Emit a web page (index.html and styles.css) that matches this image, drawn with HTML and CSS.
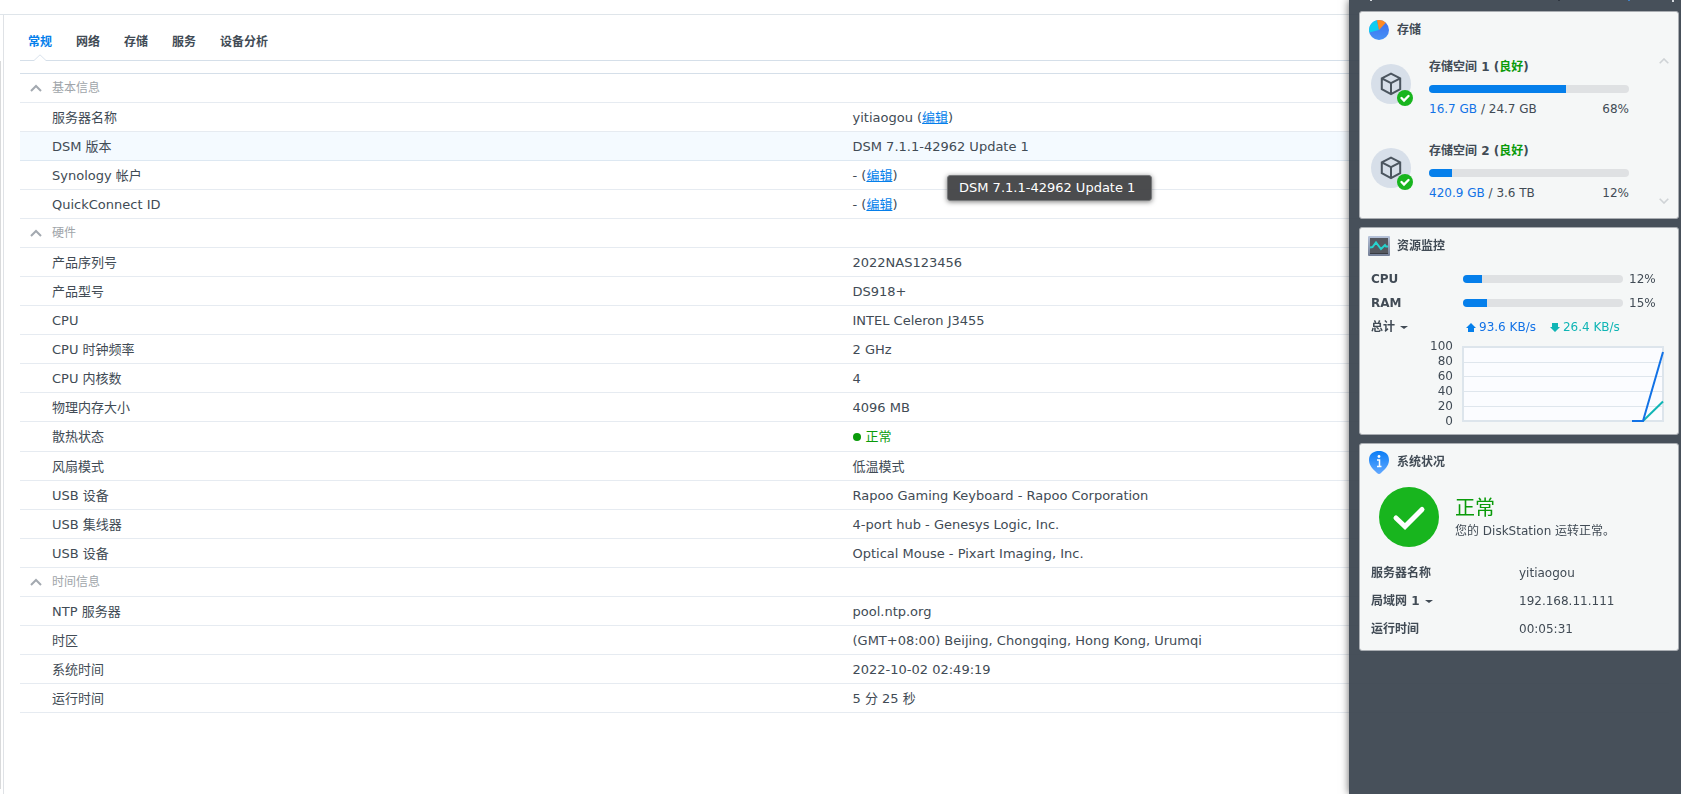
FILE: index.html
```html
<!DOCTYPE html>
<html lang="zh-CN">
<head>
<meta charset="utf-8">
<title>信息中心</title>
<link rel="stylesheet" href="styles.css">
</head>
<body>
<div class="window">
  <div class="rail"><div class="rail-thumb"></div></div>
  <main class="content">
    <nav class="tabs">
      <button class="tab active" type="button">常规<svg class="notch" viewBox="0 0 12 7" width="12" height="7"><path d="M0 6.5L6 .8L12 6.5V7H0Z" fill="#fff"/><path d="M0 6.5L6 .8L12 6.5" fill="none" stroke="#d9e2ec"/></svg></button>
      <button class="tab" type="button">网络</button>
      <button class="tab" type="button">存储</button>
      <button class="tab" type="button">服务</button>
      <button class="tab" type="button">设备分析</button>
    </nav>
    <table class="info">
      <tbody>
        <tr><th class="group" colspan="2" scope="colgroup"><button class="toggle" type="button"><svg viewBox="0 0 12 8" width="12" height="8"><path d="M1 7L6 2L11 7" fill="none" stroke="#a3a9b0" stroke-width="2"/></svg>基本信息</button></th></tr>
        <tr><th scope="row">服务器名称</th><td>yitiaogou (<a href="#name">编辑</a>)</td></tr>
        <tr class="hover"><th scope="row">DSM 版本</th><td>DSM 7.1.1-42962 Update 1</td></tr>
        <tr><th scope="row">Synology 帐户</th><td>- (<a href="#account">编辑</a>)</td></tr>
        <tr><th scope="row">QuickConnect ID</th><td>- (<a href="#quickconnect">编辑</a>)</td></tr>
      </tbody>
      <tbody>
        <tr><th class="group" colspan="2" scope="colgroup"><button class="toggle" type="button"><svg viewBox="0 0 12 8" width="12" height="8"><path d="M1 7L6 2L11 7" fill="none" stroke="#a3a9b0" stroke-width="2"/></svg>硬件</button></th></tr>
        <tr><th scope="row">产品序列号</th><td>2022NAS123456</td></tr>
        <tr><th scope="row">产品型号</th><td>DS918+</td></tr>
        <tr><th scope="row">CPU</th><td>INTEL Celeron J3455</td></tr>
        <tr><th scope="row">CPU 时钟频率</th><td>2 GHz</td></tr>
        <tr><th scope="row">CPU 内核数</th><td>4</td></tr>
        <tr><th scope="row">物理内存大小</th><td>4096 MB</td></tr>
        <tr class="thermal"><th scope="row">散热状态</th><td><span class="state"><i class="dot"></i>正常</span></td></tr>
        <tr><th scope="row">风扇模式</th><td>低温模式</td></tr>
        <tr><th scope="row">USB 设备</th><td>Rapoo Gaming Keyboard - Rapoo Corporation</td></tr>
        <tr><th scope="row">USB 集线器</th><td>4-port hub - Genesys Logic, Inc.</td></tr>
        <tr><th scope="row">USB 设备</th><td>Optical Mouse - Pixart Imaging, Inc.</td></tr>
      </tbody>
      <tbody>
        <tr><th class="group" colspan="2" scope="colgroup"><button class="toggle" type="button"><svg viewBox="0 0 12 8" width="12" height="8"><path d="M1 7L6 2L11 7" fill="none" stroke="#a3a9b0" stroke-width="2"/></svg>时间信息</button></th></tr>
        <tr><th scope="row">NTP 服务器</th><td>pool.ntp.org</td></tr>
        <tr><th scope="row">时区</th><td>(GMT+08:00) Beijing, Chongqing, Hong Kong, Urumqi</td></tr>
        <tr><th scope="row">系统时间</th><td>2022-10-02 02:49:19</td></tr>
        <tr><th scope="row">运行时间</th><td>5 分 25 秒</td></tr>
      </tbody>
    </table>
  </main>
</div>

<div class="tooltip" role="tooltip">DSM 7.1.1-42962 Update 1</div>

<aside class="widgets">
  <svg class="strip" viewBox="0 0 320 11" width="320" height="11"><path d="M11 0h2v1h-2zM313 0h2v2h-2z" fill="#d5d9de"/><path d="M199 0h2v1h-2z" fill="#2f3640"/><path d="M269 0h2v1h-2z" fill="#3f7fc4"/></svg>

  <section class="card">
    <h2 class="card-title">
      <svg viewBox="0 0 20 20" width="22" height="20"><defs><linearGradient id="pie" x1="0" y1="0" x2="0" y2="1"><stop offset="0" stop-color="#3b6df0"/><stop offset="1" stop-color="#4792f5"/></linearGradient></defs><circle cx="10" cy="10" r="10" fill="url(#pie)"/><path d="M10 10L.3 12.4A10 10 0 0 1 8 .2Z" fill="#10cdf0"/><path d="M10 10L8 .2A10 10 0 0 1 16.8 2.7Z" fill="#ff8a25"/></svg>
      存储
    </h2>
    <div class="storage">
      <div class="volumes">
        <div class="volume">
          <svg class="volume-icon" viewBox="0 0 44 44" width="44" height="44"><circle cx="20" cy="20" r="20" fill="#d7dfe9"/><path d="M20 9.700L29.200 14.400V25.200L20 30.200L10.800 25.200V14.400ZM10.800 14.400L20 19.200L29.200 14.400M20 19.200V30.200" fill="none" stroke="#4b555f" stroke-width="2"/><circle cx="34" cy="34" r="8" fill="#18b51e"/><path d="M30.500 34L33 36.500L37.500 32" fill="none" stroke="#fff" stroke-width="2.400" stroke-linecap="round"/></svg>
          <div class="volume-body">
            <h3 class="volume-name">存储空间 1 (<span class="good">良好</span>)</h3>
            <div class="bar" role="progressbar" aria-valuenow="68"><div class="fill" style="width:68.5%"></div></div>
            <div class="usage"><span><span class="used">16.7 GB</span> / 24.7 GB</span><span>68%</span></div>
          </div>
        </div>
        <div class="volume">
          <svg class="volume-icon" viewBox="0 0 44 44" width="44" height="44"><circle cx="20" cy="20" r="20" fill="#d7dfe9"/><path d="M20 9.700L29.200 14.400V25.200L20 30.200L10.800 25.200V14.400ZM10.800 14.400L20 19.200L29.200 14.400M20 19.200V30.200" fill="none" stroke="#4b555f" stroke-width="2"/><circle cx="34" cy="34" r="8" fill="#18b51e"/><path d="M30.500 34L33 36.500L37.500 32" fill="none" stroke="#fff" stroke-width="2.400" stroke-linecap="round"/></svg>
          <div class="volume-body">
            <h3 class="volume-name">存储空间 2 (<span class="good">良好</span>)</h3>
            <div class="bar" role="progressbar" aria-valuenow="12"><div class="fill" style="width:11.5%"></div></div>
            <div class="usage"><span><span class="used">420.9 GB</span> / 3.6 TB</span><span>12%</span></div>
          </div>
        </div>
      </div>
      <div class="pager">
        <button class="icon-button" type="button" aria-label="上一个"><svg viewBox="0 0 10 6" width="10" height="6"><path d="M.7 5.3L5 1L9.3 5.3" fill="none" stroke="#cfd3d6" stroke-width="1.6"/></svg></button>
        <button class="icon-button" type="button" aria-label="下一个"><svg viewBox="0 0 10 6" width="10" height="6"><path d="M.7 .7L5 5L9.3 .7" fill="none" stroke="#cfd3d6" stroke-width="1.6"/></svg></button>
      </div>
    </div>
  </section>

  <section class="card">
    <h2 class="card-title">
      <svg viewBox="0 0 22 20" width="22" height="20"><defs><linearGradient id="frame" x1="0" y1="0" x2="0" y2="1"><stop offset="0" stop-color="#b8c4da"/><stop offset="1" stop-color="#737e96"/></linearGradient></defs><rect width="22" height="20" rx="1" fill="url(#frame)"/><rect x="2" y="2" width="18" height="16" fill="#55585f"/><path d="M2 17h18v1H2z" fill="#383b42"/><path d="M2 11.500L4.500 11L8 6.500L13 13L17 9L18 10.500H20" fill="none" stroke="#27d3cd" stroke-width="2"/></svg>
      资源监控
    </h2>
    <div class="resources">
      <div class="meter"><span class="label">CPU</span><div class="bar" role="progressbar" aria-valuenow="12"><div class="fill" style="width:12%"></div></div><span>12%</span></div>
      <div class="meter"><span class="label">RAM</span><div class="bar" role="progressbar" aria-valuenow="15"><div class="fill" style="width:15%"></div></div><span>15%</span></div>
      <div class="meter">
        <button class="picker" type="button">总计<i class="caret"></i></button>
        <div class="rates">
          <span class="rate up"><svg viewBox="0 0 10 9" width="10" height="9"><path d="M5 0L10 5H8V9H2V5H0Z" fill="#057feb"/></svg>93.6 KB/s</span>
          <span class="rate down"><svg viewBox="0 0 10 9" width="10" height="9"><path d="M2 0H8V4H10L5 9L0 4H2Z" fill="#10b5b5"/></svg>26.4 KB/s</span>
        </div>
      </div>
      <div class="chart">
        <div class="axis"><span>100</span><span>80</span><span>60</span><span>40</span><span>20</span><span>0</span></div>
        <svg class="plot" viewBox="0 0 202 76" width="202" height="76"><rect x="1" y="1" width="200" height="74" fill="#fbfcff"/><path d="M1 16.500H201M1 30.500H201M1 45.500H201M1 60.500H201" stroke="#dfe6ed"/><rect x="1" y="1" width="200" height="74" fill="none" stroke="#dde5ec" stroke-width="2"/><path d="M181 75L201 55.500" stroke="#10b5b5" stroke-width="2"/><path d="M170 75H181L201 6" fill="none" stroke="#1272e6" stroke-width="2"/></svg>
      </div>
    </div>
  </section>

  <section class="card">
    <h2 class="card-title">
      <svg viewBox="0 0 20 23" width="22" height="23"><defs><linearGradient id="pin" x1="0" y1="0" x2="0" y2="1"><stop offset="0" stop-color="#0b7df5"/><stop offset="1" stop-color="#62a8ff"/></linearGradient></defs><path d="M10 0C15 0 20 2.500 20 9C20 15 15 19 12 22Q10 24 8 22C5 19 0 15 0 9C0 2.500 5 0 10 0Z" fill="url(#pin)"/><circle cx="10" cy="5.500" r="1.400" fill="#fff"/><path d="M8 9H10.500V15.500M8 15.500H12.500" fill="none" stroke="#fff" stroke-width="1.500"/></svg>
      系统状况
    </h2>
    <div class="health">
      <svg viewBox="0 0 60 60" width="60" height="60"><circle cx="30" cy="30" r="30" fill="#18b51e"/><path d="M17 31L26 39.500L43 22.500" fill="none" stroke="#fff" stroke-width="5" stroke-linecap="round"/></svg>
      <div><p class="health-state">正常</p><p class="health-text">您的 DiskStation 运转正常。</p></div>
    </div>
    <dl class="facts">
      <dt>服务器名称</dt><dd>yitiaogou</dd>
      <dt><button class="picker" type="button">局域网 1<i class="caret"></i></button></dt><dd>192.168.11.111</dd>
      <dt>运行时间</dt><dd>00:05:31</dd>
    </dl>
  </section>
</aside>
</body>
</html>
```
FILE: styles.css
```css
* { box-sizing: border-box; }
body {
  margin: 0;
  padding-top: 14px;
  min-height: 100vh;
  display: flex;
  background: #fff;
  color: #414b55;
  font: 13px/20px Verdana, "DejaVu Sans", "Noto Sans CJK SC", sans-serif;
}
button {
  padding: 0;
  border: 0;
  background: none;
  color: inherit;
  font: inherit;
  cursor: pointer;
}
h2, h3, p, dl, dd { margin: 0; }
svg { flex: none; }

/* Info window */
.window { flex: 1; display: flex; border-top: 1px solid #dfe5ea; }
.rail { width: 3px; padding: 46px 0 5px; display: flex; }
.rail-thumb { width: 1px; background: #d9dadb; }
.content { flex: 1; padding: 0 12px 0 16px; border-left: 1px solid #dfe2e6; }
.tabs {
  display: flex;
  gap: 24px;
  height: 46px;
  padding: 0 8px;
  margin-bottom: 12px;
  border-bottom: 1px solid #d5dfe9;
}
.tab { position: relative; height: 46px; padding-top: 8px; font-size: 12px; font-weight: bold; }
.tab.active { color: #057feb; }
.notch { position: absolute; left: 50%; bottom: 0; margin-left: -6px; }

.info { width: 100%; table-layout: fixed; border-collapse: separate; border-spacing: 0; border-top: 1px solid #d5dfe9; }
.info th, .info td { width: 50%; height: 29px; padding: 2px 8px 0; border-bottom: 1px solid #e6ebf1; text-align: left; font-weight: normal; }
.info th { padding-left: 32px; }
.info th.group { padding: 0 10px; }
.info .thermal th, .info .thermal td { height: 30px; padding-top: 0; }
.info .hover { background: #f4faff; }
.info .hover th, .info .hover td { border-bottom-color: #dde8f2; }
.info a { color: #057feb; }
.toggle { display: flex; align-items: center; gap: 10px; color: #a0a5aa; font-size: 12px; }
.state { display: flex; align-items: center; gap: 5px; color: #0a9b0a; }
.dot { width: 8px; height: 8px; border-radius: 50%; background: #0a9b0a; }

.tooltip {
  position: absolute;
  left: 947px;
  top: 175px;
  min-width: 205px;
  padding: 2px 11px;
  border: 1px solid #77797b;
  border-radius: 3px;
  background: rgba(65, 66, 68, .95);
  box-shadow: 0 1px 5px rgba(0, 0, 0, .5);
  color: #fff;
}

/* Widget panel */
.widgets {
  position: fixed;
  top: 0;
  right: 0;
  bottom: 0;
  width: 332px;
  padding: 0 2px 0 10px;
  display: flex;
  flex-direction: column;
  gap: 8px;
  background: rgba(57, 67, 77, .93);
  box-shadow: 0 0 8px rgba(0, 0, 0, .6);
  font-size: 12px;
}
.strip { margin-bottom: -8px; }
.card { min-height: 208px; border: 1px solid #a9adb2; border-radius: 3px; background: #f5f7f7; }
.card-title { display: flex; align-items: center; gap: 7px; height: 36px; padding-left: 8px; font-size: 12px; }
.bar { height: 8px; border-radius: 4px; background: #dfe1e3; overflow: hidden; }
.fill { height: 100%; background: #057feb; }
.good { color: #0a9b0a; }

.storage { display: flex; padding-left: 11px; }
.volumes { width: 258px; }
.volume { display: flex; gap: 14px; height: 84px; padding-top: 9px; }
.volume-icon { margin-top: 7px; }
.volume-body { flex: 1; }
.volume-name { font-size: 12px; }
.volume-name + .bar { margin: 8px 0 6px; }
.usage { display: flex; justify-content: space-between; }
.used { color: #1272e6; }
.pager { display: flex; flex-direction: column; justify-content: space-between; padding: 10px 0 12px 30px; }
.icon-button { display: flex; }

.resources { padding: 3px 14px 0 11px; }
.meter { display: grid; grid-template-columns: 92px 160px 1fr; align-items: center; height: 24px; }
.meter > span:last-child { padding-left: 6px; }
.label { font-weight: bold; }
.picker { display: flex; align-items: center; gap: 5px; font-weight: bold; }
.caret { border: 4px solid transparent; border-top: 3px solid #414b55; border-bottom: 0; }
.rates { grid-column: 2 / 4; display: flex; gap: 14px; padding-left: 3px; white-space: nowrap; }
.rate { display: flex; align-items: center; gap: 3px; }
.up { color: #1272e6; }
.down { color: #10b5b5; }
.chart { display: flex; justify-content: flex-end; gap: 9px; }
.axis { display: flex; flex-direction: column; justify-content: space-between; height: 90px; line-height: 15px; text-align: right; }
.plot { margin-top: 7px; }

.health { display: flex; align-items: center; gap: 16px; padding: 7px 0 0 19px; }
.health-state { color: #0a9b0a; font-size: 20px; line-height: 28px; }
.health-text { line-height: 18px; }
.facts { display: grid; grid-template-columns: 148px 1fr; row-gap: 8px; padding: 16px 0 0 11px; }
.facts dt { font-weight: bold; }
```
